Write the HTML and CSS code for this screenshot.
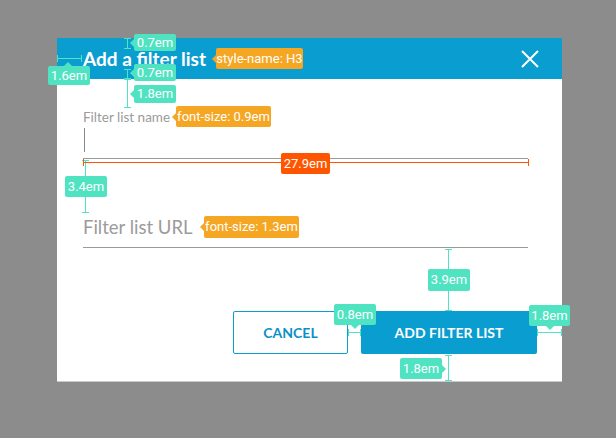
FILE: index.html
```html
<!DOCTYPE html>
<html>
<head>
<meta charset="utf-8">
<link rel="stylesheet" href="styles.css">
</head>
<body>
<div class="page">
  <section class="dialog">
    <header class="dialog-header">
      <h3 class="dialog-title">Add a filter list</h3>
      <svg class="close" width="18" height="18" viewBox="0 0 18 18"><path d="M1 1 L17 17 M17 1 L1 17" stroke="#fff" stroke-width="2" fill="none"/></svg>
    </header>
    <div class="dialog-body">
      <div class="field-label">Filter list name</div>
      <div class="field-input"><span class="caret"></span></div>
      <div class="field-url">Filter list URL</div>
    </div>
    <div class="actions">
      <button class="btn btn-cancel">CANCEL</button>
      <button class="btn btn-primary">ADD FILTER LIST</button>
    </div>
  </section>

  <div class="marks">
    <div class="vl teal m-v1"></div>
    <div class="vl teal m-v2"></div>
    <div class="vl teal m-v3"></div>
    <div class="hl teal m-h1"></div>
    <div class="vl teal m-v4"></div>
    <div class="vl teal m-v5"></div>
    <div class="vl teal m-v6"></div>
    <div class="hl teal m-h2"></div>
    <div class="hl teal m-h3"></div>
    <div class="hl red m-h4"></div>

    <div class="badge teal-bg arr-left b1">0.7em</div>
    <div class="badge teal-bg arr-left b2">0.7em</div>
    <div class="badge teal-bg arr-left b3">1.8em</div>
    <div class="badge teal-bg arr-up b4">1.6em</div>
    <div class="badge orange-bg arr-left o1">style-name: H3</div>
    <div class="badge orange-bg arr-left o2">font-size: 0.9em</div>
    <div class="badge red-bg r1">27.9em</div>
    <div class="badge teal-bg b5">3.4em</div>
    <div class="badge orange-bg arr-left o3">font-size: 1.3em</div>
    <div class="badge teal-bg b6">3.9em</div>
    <div class="badge teal-bg arr-down b7">0.8em</div>
    <div class="badge teal-bg arr-down b8">1.8em</div>
    <div class="badge teal-bg arr-right b9">1.8em</div>
  </div>
</div>
</body>
</html>
```
FILE: styles.css
```css
html, body {
  margin: 0;
  padding: 0;
}
body {
  background: #8c8c8c;
  width: 616px;
  height: 438px;
  overflow: hidden;
}
.page {
  position: relative;
  width: 616px;
  height: 438px;
  padding-top: 38px;
  box-sizing: border-box;
}
.dialog {
  margin-left: 57px;
  width: 505px;
  height: 343px;
  background: #fff;
  box-shadow: 0 1px 0 #c9c9c9;
  font-family: "Lato", "Open Sans", sans-serif;
}
.dialog-header {
  height: 41px;
  background: #0a9dd0;
  display: flex;
  align-items: center;
  justify-content: space-between;
  padding: 0 23px 0 26px;
}
.dialog-title {
  margin: 0;
  color: #fff;
  font-size: 19px;
  font-weight: 700;
  line-height: 22px;
}
.close {
  display: block;
}
.dialog-body {
  padding: 29px 34px 0 26px;
}
.field-label {
  color: #9b9b9b;
  font-size: 13.5px;
  line-height: 18px;
}
.field-input {
  height: 32px;
  border-bottom: 1px solid #9b9b9b;
  display: flex;
  align-items: flex-start;
}
.caret {
  display: block;
  width: 1px;
  height: 24px;
  margin-top: 2px;
  margin-left: 1px;
  background: #8a8a8a;
}
.field-url {
  margin-top: 54px;
  height: 31px;
  padding-top: 3px;
  border-bottom: 1px solid #9b9b9b;
  color: #9b9b9b;
  font-size: 18.5px;
  line-height: 22px;
}
.actions {
  display: flex;
  justify-content: flex-end;
  gap: 13px;
  margin-top: 63px;
  padding-right: 25px;
}
.btn {
  height: 43px;
  border-radius: 2px;
  font-family: "Lato", "Open Sans", sans-serif;
  font-weight: 700;
  font-size: 14px;
  letter-spacing: 0;
  cursor: pointer;
  padding: 0;
}
.btn-cancel {
  width: 115px;
  background: #fff;
  color: #0a90c8;
  border: 1px solid #0a9dd0;
}
.btn-primary {
  width: 176px;
  background: #0a9dd0;
  color: #fff;
  border: none;
}

/* measurement overlay */
.marks {
  position: absolute;
  left: 0;
  top: 0;
  width: 616px;
  height: 438px;
  pointer-events: none;
  font-family: "Roboto", "Liberation Sans", sans-serif;
}
.vl, .hl {
  position: absolute;
}
.vl { width: 1px; }
.hl { height: 1px; }
.teal { background: #50e3c2; }
.red { background: #ff5500; }
.vl::before, .vl::after {
  content: "";
  position: absolute;
  left: -3px;
  width: 7px;
  height: 1px;
  background: inherit;
}
.vl::before { top: 0; }
.vl::after { bottom: 0; }
.hl::before, .hl::after {
  content: "";
  position: absolute;
  top: -3px;
  width: 1px;
  height: 7px;
  background: inherit;
}
.hl::before { left: 0; }
.hl::after { right: 0; }

.m-v1 { left: 127px; top: 38px; height: 11px; }
.m-v2 { left: 127px; top: 69px; height: 10px; }
.m-v3 { left: 127px; top: 79px; height: 29px; }
.m-h1 { left: 57px; top: 58px; width: 25px; }
.m-v4 { left: 85px; top: 160px; height: 53px; }
.m-v5 { left: 448px; top: 249px; height: 62px; }
.m-v6 { left: 448px; top: 355px; height: 26px; }
.m-h2 { left: 348px; top: 332px; width: 13px; }
.m-h3 { left: 537px; top: 332px; width: 25px; }
.m-h4 { left: 83px; top: 162px; width: 446px; }

.badge {
  position: absolute;
  height: 21px;
  line-height: 21px;
  font-size: 13px;
  color: #fff;
  text-align: center;
  border-radius: 2px;
  white-space: nowrap;
}
.teal-bg { background: #50e3c2; --c: #50e3c2; }
.orange-bg { background: #f5a623; --c: #f5a623; }
.red-bg { background: #ff5500; --c: #ff5500; }
.badge::before {
  content: "";
  position: absolute;
  width: 0;
  height: 0;
}
.arr-left::before {
  left: -4px;
  top: 50%;
  margin-top: -4px;
  border-top: 4px solid transparent;
  border-bottom: 4px solid transparent;
  border-right: 4px solid var(--c);
}
.arr-right::before {
  right: -4px;
  top: 50%;
  margin-top: -4px;
  border-top: 4px solid transparent;
  border-bottom: 4px solid transparent;
  border-left: 4px solid var(--c);
}
.arr-up::before {
  top: -4px;
  left: 16px;
  border-left: 4px solid transparent;
  border-right: 4px solid transparent;
  border-bottom: 4px solid var(--c);
}
.arr-down::before {
  bottom: -4px;
  left: 50%;
  margin-left: -4px;
  border-left: 4px solid transparent;
  border-right: 4px solid transparent;
  border-top: 4px solid var(--c);
}

.b1 { left: 134px; top: 34px; width: 42px; height: 17px; line-height: 17px; }
.b2 { left: 134px; top: 64px; width: 42px; height: 17px; line-height: 17px; }
.b3 { left: 134px; top: 85px; width: 42px; height: 18px; line-height: 18px; }
.b4 { left: 48px; top: 66px; width: 42px; height: 19px; line-height: 19px; }
.o1 { left: 216px; top: 48px; width: 87px; }
.o2 { left: 176px; top: 106px; width: 95px; }
.r1 { left: 281px; top: 153px; width: 49px; }
.b5 { left: 65px; top: 176px; width: 42px; }
.o3 { left: 204px; top: 216px; width: 95px; height: 22px; line-height: 22px; }
.b6 { left: 428px; top: 269px; width: 42px; height: 22px; line-height: 22px; }
.b7 { left: 334px; top: 304px; width: 42px; }
.b8 { left: 529px; top: 305px; width: 41px; }
.b9 { left: 400px; top: 358px; width: 42px; }
```
